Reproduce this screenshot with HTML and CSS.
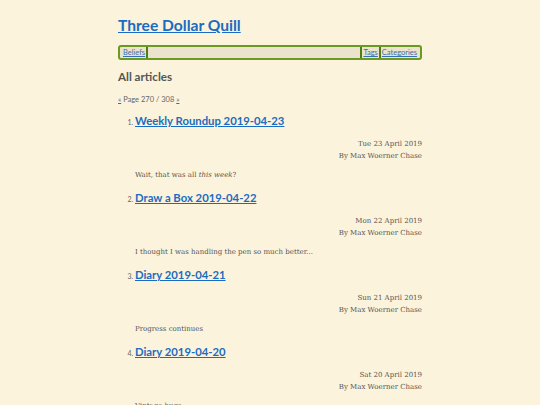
FILE: index.html
```html
<!DOCTYPE html>
<html>
<head>
<meta charset="utf-8">
<link rel="stylesheet" href="styles.css">
</head>
<body>
<div class="page">
  <h1 class="site-title"><a href="#">Three Dollar Quill</a></h1>
  <nav class="nav">
    <a href="#" class="nav-link">Beliefs</a>
    <span class="nav-fill"></span>
    <a href="#" class="nav-link nav-left">Tags</a>
    <a href="#" class="nav-link nav-left">Categories</a>
  </nav>
  <h2 class="section">All articles</h2>
  <p class="pager"><a href="#">«</a> Page 270 / 308 <a href="#">»</a></p>
  <ol class="articles">
    <li class="article">
      <h3 class="art-title"><a href="#">Weekly Roundup 2019-04-23</a></h3>
      <div class="meta">Tue 23 April 2019<br>By Max Woerner Chase</div>
      <p class="excerpt">Wait, that was all <em>this week</em>?</p>
    </li>
    <li class="article">
      <h3 class="art-title"><a href="#">Draw a Box 2019-04-22</a></h3>
      <div class="meta">Mon 22 April 2019<br>By Max Woerner Chase</div>
      <p class="excerpt">I thought I was handling the pen so much better...</p>
    </li>
    <li class="article">
      <h3 class="art-title"><a href="#">Diary 2019-04-21</a></h3>
      <div class="meta">Sun 21 April 2019<br>By Max Woerner Chase</div>
      <p class="excerpt">Progress continues</p>
    </li>
    <li class="article">
      <h3 class="art-title"><a href="#">Diary 2019-04-20</a></h3>
      <div class="meta">Sat 20 April 2019<br>By Max Woerner Chase</div>
      <p class="excerpt">Vintage bugs</p>
    </li>
  </ol>
</div>
</body>
</html>
```
FILE: styles.css
```css
html, body {
  margin: 0;
  padding: 0;
  background: #fcf3dc;
}
body {
  font-family: "DejaVu Serif", serif;
  color: #555;
}
.page {
  width: 304px;
  margin: 0 auto;
  padding-top: 14px;
}
.site-title {
  margin: 0;
  font-family: Lato, sans-serif;
  font-size: 15.6px;
  font-weight: 700;
  line-height: 22px;
}
.site-title a, .art-title a {
  color: #1a6cc0;
  text-decoration: underline;
}
.nav {
  margin-top: 9px;
  display: flex;
  align-items: stretch;
  border: 2px solid #6b9a22;
  border-radius: 3px;
  background: #ebe3cd;
  height: 11px;
  padding: 0 2px;
  font-family: Lato, sans-serif;
  font-size: 7.5px;
  line-height: 11px;
}
.nav-link {
  color: #3a6fb0;
  padding: 0 1px;
  border-right: 2px solid #4f7d14;
}
.nav-left {
  border-right: none;
  border-left: 2px solid #4f7d14;
}
.nav-fill { flex: 1; }
.section {
  margin: 8px 0 0;
  font-family: Lato, sans-serif;
  font-size: 11.6px;
  font-weight: 700;
  line-height: 18px;
  color: #555;
}
.pager {
  margin: 9px 0 0;
  font-family: Lato, sans-serif;
  font-size: 7.5px;
  line-height: 10px;
  color: #666;
}
.pager a { color: #3a6fb0; }
.articles {
  margin: 7px 0 0;
  padding-left: 17px;
  font-size: 7px;
}
.article { margin: 0; }
.article::marker {
  font-family: Lato, sans-serif;
  color: #666;
}
.art-title {
  margin: 0;
  font-family: Lato, sans-serif;
  font-size: 11.3px;
  font-weight: 700;
  line-height: 18px;
}
.meta {
  margin-top: 8px;
  text-align: right;
  font-size: 7px;
  line-height: 12px;
  color: #555;
}
.excerpt {
  margin: 7px 0 8px;
  font-size: 7px;
  line-height: 12px;
  color: #555;
}
```
